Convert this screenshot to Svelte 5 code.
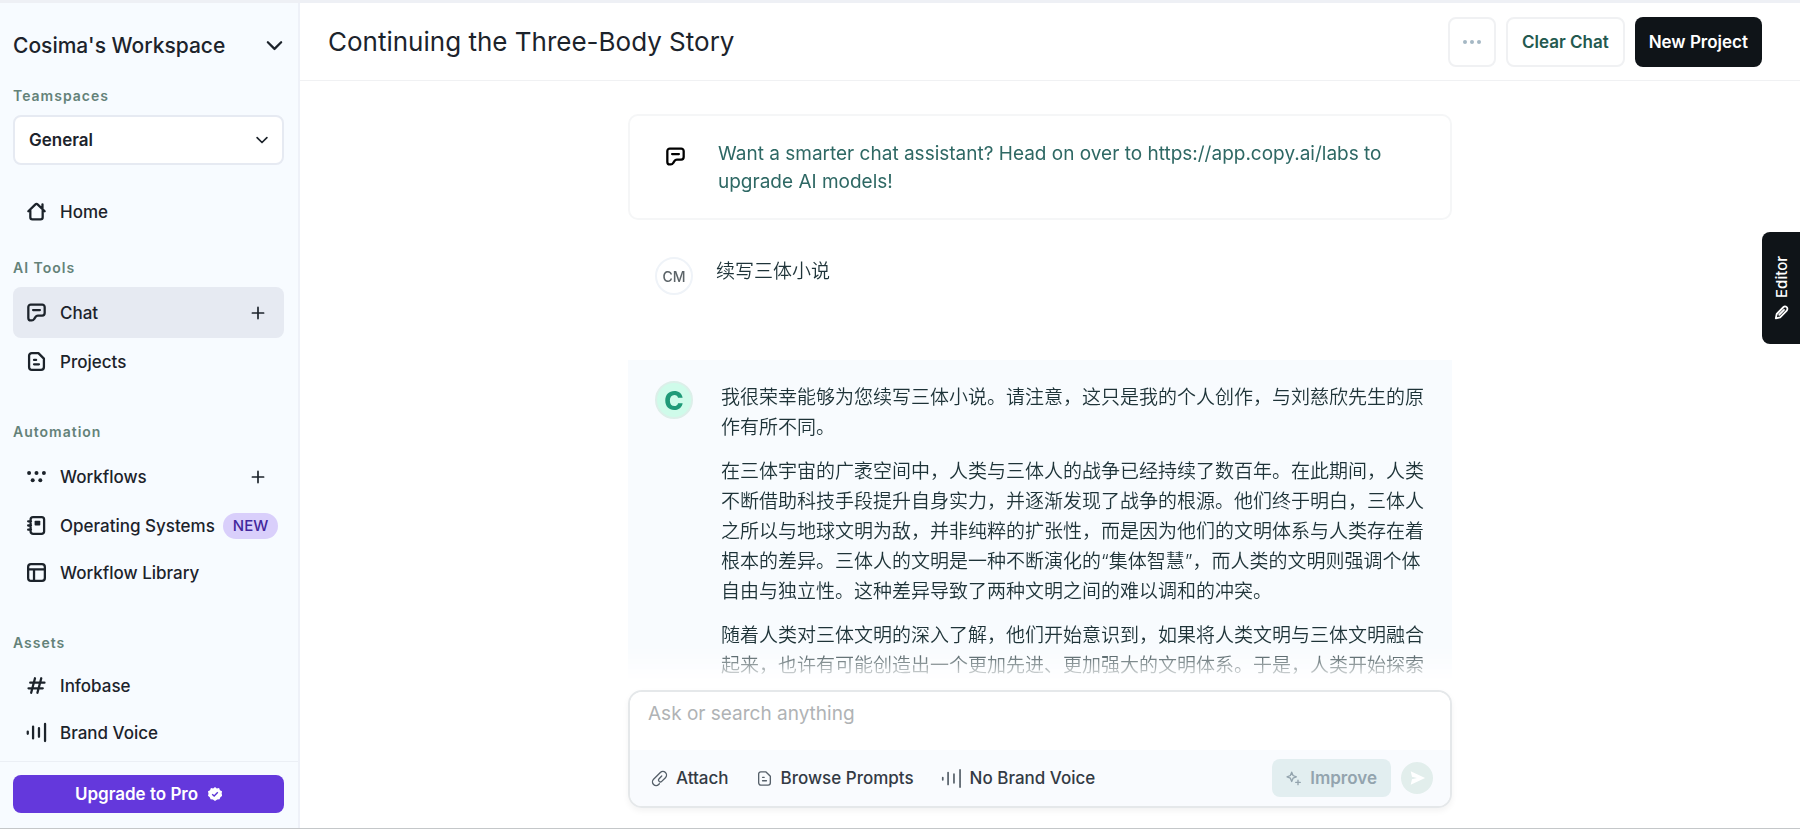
<script>
	let teamspace = $state('General');
	let prompt = $state('');

	const sections = [
		{
			title: 'AI Tools',
			items: [
				{ name: 'Chat', icon: 'bubble', active: true, plus: true },
				{ name: 'Projects', icon: 'doc' }
			]
		},
		{
			title: 'Automation',
			items: [
				{ name: 'Workflows', icon: 'dots', plus: true },
				{ name: 'Operating Systems', icon: 'book', badge: 'NEW' },
				{ name: 'Workflow Library', icon: 'layout' }
			]
		},
		{
			title: 'Assets',
			items: [
				{ name: 'Infobase', icon: 'hash' },
				{ name: 'Brand Voice', icon: 'voice' }
			]
		}
	];

	const answer = [
		'我很荣幸能够为您续写三体小说。请注意，这只是我的个人创作，与刘慈欣先生的原作有所不同。',
		'在三体宇宙的广袤空间中，人类与三体人的战争已经持续了数百年。在此期间，人类不断借助科技手段提升自身实力，并逐渐发现了战争的根源。他们终于明白，三体人之所以与地球文明为敌，并非纯粹的扩张性，而是因为他们的文明体系与人类存在着根本的差异。三体人的文明是一种不断演化的“集体智慧”，而人类的文明则强调个体自由与独立性。这种差异导致了两种文明之间的难以调和的冲突。',
		'随着人类对三体文明的深入了解，他们开始意识到，如果将人类文明与三体文明融合起来，也许有可能创造出一个更加先进、更加强大的文明体系。于是，人类开始探索'
	];
</script>

{#snippet icon(name)}
	<svg class="icon {name}" viewBox="0 0 20 20" aria-hidden="true">
		{#if name === 'house'}
			<path d="M3.5 9V16a2.2 2.2 0 0 0 2.200 2.200h8.600a2.200 2.200 0 0 0 2.200-2.200V9M1.400 9.800l7.200-7.100a2 2 0 0 1 2.800 0l7.200 7.100M16.300 2.400v5" />
		{:else if name === 'bubble'}
			<path d="M4 1.600h12a2.600 2.600 0 0 1 2.600 2.600v6.400a2.600 2.600 0 0 1-2.600 2.600h-4.600c-1.300 0-1.900.6-2.600 1.700l-1.300 2a3 3 0 0 1-2.500 1.500H4a2.600 2.600 0 0 1-2.600-2.600V4.200A2.600 2.600 0 0 1 4 1.600zM6.400 7.400h7.200" />
		{:else if name === 'doc'}
			<path d="M5 1.200h7L17.800 7v8.800a3 3 0 0 1-3 3H5.200a3 3 0 0 1-3-3V4a2.800 2.800 0 0 1 2.800-2.800zM7.400 8.400h2.200M7.400 13h5.200" />
		{:else if name === 'dots'}
			<g class="fill">
				<circle cx="2.200" cy="6.400" r="2.100" /><circle cx="10" cy="6.400" r="2.100" /><circle cx="17.800" cy="6.400" r="2.100" />
				<circle cx="6" cy="14" r="2.100" /><circle cx="14" cy="14" r="2.100" />
			</g>
		{:else if name === 'book'}
			<path d="M6.400 1.200h9a2.600 2.600 0 0 1 2.600 2.600v12.400a2.600 2.600 0 0 1-2.600 2.600h-9a2.600 2.600 0 0 1-2.600-2.600V3.800a2.600 2.600 0 0 1 2.600-2.600zM1.200 5.600h3M1.200 10h3M1.200 14.400h3" />
			<rect class="fill" x="8" y="5" width="6" height="5" rx=".8" />
		{:else if name === 'layout'}
			<rect x="1.200" y="1.200" width="17.600" height="17.600" rx="3" />
			<path d="M1.200 6.600h17.600M7.400 6.600v12" />
		{:else if name === 'hash'}
			<path d="M8.400 2.400 4.400 17.600M15 2.400l-4 15.200M3.400 7h15M1.600 13h15" />
		{:else if name === 'voice'}
			<path d="M.8 9v2.400M6.400 3.800v12.400M12.600 5.400v9.200M19 1v18" />
		{:else if name === 'clip'}
			<g transform="rotate(-45 10 10)">
				<path d="M5 14.800H3.600a4.800 4.800 0 0 1 0-9.600h12.800a4.800 4.800 0 0 1 0 9.600H9.400a2.400 2.400 0 0 1 0-5h5" />
			</g>
		{:else if name === 'spark'}
			<path d="M7.600 1.600 9.400 6l4.400 1.800L9.400 9.600l-1.800 4.400-1.800-4.400L1.400 7.800 5.800 6zM16 12.200v6M13 15.200h6" />
		{:else if name === 'down'}
			<path d="m3 6.600 7 7 7-7" />
		{:else if name === 'plus'}
			<path d="M10 2v16M2 10h16" />
		{:else if name === 'pencil'}
			<path d="M2.400 17.800 3.600 12 12.400 3a2.900 2.900 0 0 1 4.600 4.400L8.200 16.600zM7 13l6.400-6.400" />
		{/if}
	</svg>
{/snippet}

<div class="app">
	<aside class="sidebar">
		<div class="nav">
			<button class="workspace">
				<span>Cosima's Workspace</span>
				{@render icon('down')}
			</button>

			<label class="label" for="teamspace">Teamspaces</label>
			<div class="select">
				<select id="teamspace" bind:value={teamspace}>
					<option>General</option>
				</select>
				{@render icon('down')}
			</div>

			<nav>
				<div class="row home">
					<a href="#home">{@render icon('house')}<span>Home</span></a>
				</div>
				{#each sections as section (section.title)}
					<h2 class="label">{section.title}</h2>
					{#each section.items as item (item.name)}
						<div class="row" class:active={item.active} class:tall={item.plus}>
							<a href="#{item.icon}">{@render icon(item.icon)}<span>{item.name}</span></a>
							{#if item.badge}
								<span class="badge">{item.badge}</span>
							{/if}
							{#if item.plus}
								<button class="add" aria-label="New {item.name}">{@render icon('plus')}</button>
							{/if}
						</div>
					{/each}
				{/each}
			</nav>
		</div>
		<div class="upgrade">
			<button>
				Upgrade to Pro
				<svg viewBox="0 0 20 20" aria-hidden="true">
					<path d="m10 0 2.600 2 3.200-.4 1.300 3 2.900 1.600-.5 3.300.9 3.100-2.700 1.900-1.200 3-3.300.2L10 20l-2.900-2.300-3.400-.2-1.200-3L0 12.600l.7-3.100L0 6.200l2.900-1.600 1.300-3L7.400 2z" fill="#fff" />
					<path d="m6 10.400 2.800 2.600L14 7.400" fill="none" stroke="#5b35d5" stroke-width="2" />
				</svg>
			</button>
		</div>
	</aside>

	<main>
		<header>
			<h1>Continuing the Three-Body Story</h1>
			<div class="actions">
				<button class="more" aria-label="More">
					<svg viewBox="0 0 20 6" aria-hidden="true">
						<circle cx="3" cy="3" r="2" /><circle cx="10" cy="3" r="2" /><circle cx="17" cy="3" r="2" />
					</svg>
				</button>
				<button>Clear Chat</button>
				<button class="dark">New Project</button>
			</div>
		</header>

		<div class="thread">
			<section class="message notice">
				<div class="who">{@render icon('bubble')}</div>
				<p>Want a smarter chat assistant? Head on over to https://app.copy.ai/labs to upgrade AI models!</p>
			</section>
			<section class="message user">
				<div class="who"><span class="avatar">CM</span></div>
				<p lang="zh-CN">续写三体小说</p>
			</section>
			<section class="message bot">
				<div class="who"><span class="avatar logo">C</span></div>
				<div class="text" lang="zh-CN">
					{#each answer as paragraph}
						<p>{paragraph}</p>
					{/each}
				</div>
			</section>
		</div>

		<div class="dock">
			<form class="composer" onsubmit={(e) => e.preventDefault()}>
				<textarea rows="1" placeholder="Ask or search anything" aria-label="Message" bind:value={prompt}></textarea>
				<div class="tools">
					<button type="button">{@render icon('clip')}Attach</button>
					<button type="button">{@render icon('doc')}Browse Prompts</button>
					<button type="button">{@render icon('voice')}No Brand Voice</button>
					<button type="button" class="improve">{@render icon('spark')}Improve</button>
					<button class="send" aria-label="Send">
						<svg viewBox="0 0 20 20" aria-hidden="true"><path d="M3 2.500 19 10 3 17.500l1.400-6L10 10 4.400 8.500z" /></svg>
					</button>
				</div>
			</form>
		</div>
	</main>

	<button class="editor">{@render icon('pencil')}<span>Editor</span></button>
</div>

<style>
	:global(body) {
		background: #fff;
	}
	.app {
		box-sizing: border-box;
		display: flex;
		height: 100vh;
		border-top: 3px solid #eef0f5;
		border-bottom: 1px solid #c4c7c9;
		overflow: hidden;
		font-family: Inter, 'Noto Sans CJK SC', sans-serif;
		font-size: 17px;
		color: #1c232b;
	}
	.app * {
		box-sizing: border-box;
	}
	button,
	select,
	textarea {
		font: inherit;
		color: inherit;
	}
	button {
		display: flex;
		align-items: center;
		border: 0;
		padding: 0;
		background: none;
		cursor: pointer;
	}
	h1,
	h2,
	p {
		margin: 0;
	}
	.icon {
		flex: none;
		width: 19px;
		height: 19px;
		fill: none;
		stroke: currentColor;
		stroke-width: 2.400;
		stroke-linecap: round;
		stroke-linejoin: round;
		overflow: visible;
	}
	.fill {
		fill: currentColor;
		stroke: none;
	}

	/* sidebar */
	.sidebar {
		display: flex;
		flex-direction: column;
		flex: none;
		width: 300px;
		border-right: 2px solid #eef1f8;
		background: #f7fbff;
	}
	.nav {
		flex: 1;
		min-height: 0;
		padding: 23px 14px 0 13px;
		overflow: hidden;
	}
	.workspace {
		justify-content: space-between;
		width: 100%;
		height: 38px;
		margin-bottom: 22px;
		font-size: 21px;
		font-weight: 500;
	}
	.label {
		display: block;
		margin-bottom: 9px;
		font-size: 14px;
		font-weight: 600;
		line-height: 20px;
		letter-spacing: 1px;
		color: #648279;
	}
	.select {
		position: relative;
	}
	.select select {
		appearance: none;
		width: 100%;
		height: 50px;
		padding: 0 14px;
		border: 2px solid #e6eaf2;
		border-radius: 8px;
		background: #fff;
		font-weight: 600;
	}
	.select .icon {
		position: absolute;
		top: 18px;
		right: 15px;
		width: 14px;
		height: 14px;
		pointer-events: none;
	}
	.row {
		display: flex;
		align-items: center;
		height: 47px;
		padding: 0 14px;
		border-radius: 8px;
		font-weight: 500;
	}
	.row.home {
		margin: 23px 0;
	}
	.row.tall {
		height: 51px;
	}
	.row.active {
		background: #e6eaf2;
	}
	.row a {
		display: flex;
		align-items: center;
		gap: 14px;
		color: inherit;
		text-decoration: none;
		white-space: nowrap;
	}
	.row + .label {
		margin-top: 37px;
	}
	.row.home + .label {
		margin-top: 0;
	}
	.add {
		margin-left: auto;
		padding: 5px;
	}
	.add .icon {
		width: 14px;
		height: 14px;
	}
	.badge {
		margin-left: 8px;
		padding: 0 10px;
		border-radius: 13px;
		background: #d9cffb;
		color: #43279c;
		font-size: 15px;
		line-height: 26px;
	}
	.upgrade {
		padding: 13px 14px 15px 13px;
		border-top: 1px solid #ebeff5;
	}
	.upgrade button {
		justify-content: center;
		gap: 10px;
		width: 100%;
		height: 38px;
		border-radius: 8px;
		background: #6438dc;
		color: #fff;
		font-weight: 600;
	}
	.upgrade svg {
		width: 14px;
		height: 14px;
	}

	/* main column */
	main {
		display: flex;
		flex-direction: column;
		flex: 1;
		min-width: 0;
	}
	header {
		display: flex;
		align-items: center;
		justify-content: space-between;
		flex: none;
		height: 78px;
		padding: 0 38px 0 28px;
		border-bottom: 1px solid #f0f1f3;
	}
	h1 {
		font-size: 26px;
		font-weight: 400;
	}
	.actions {
		display: flex;
		gap: 10px;
	}
	.actions button {
		height: 50px;
		padding: 0 14px;
		border: 2px solid #f0f1f3;
		border-radius: 8px;
		font-weight: 600;
		color: #23594f;
	}
	.actions .more {
		padding: 0 12px;
	}
	.actions svg {
		width: 20px;
		height: 6px;
		fill: #a5b8c4;
	}
	.actions .dark {
		border: 0;
		background: #0f1418;
		color: #fff;
	}
	.thread {
		flex: 1;
		min-height: 0;
		padding: 33px 20px 0 0;
		overflow-y: auto;
		scrollbar-width: none;
		mask-image: linear-gradient(to top, transparent 8px, #000 44px);
	}
	.message {
		display: flex;
		max-width: 824px;
		margin: 0 auto;
		padding: 0 27px;
	}
	.who {
		flex: none;
		width: 61px;
	}
	.notice {
		padding-top: 24px;
		padding-bottom: 22px;
		border: 2px solid #f5f6f7;
		border-radius: 10px;
	}
	.notice p {
		font-size: 19px;
		line-height: 28px;
		color: #2e6864;
	}
	.notice .icon {
		display: block;
		margin: 7px 0 0 9px;
		color: #000;
	}
	.user {
		height: 140px;
		padding-top: 37px;
	}
	.user p,
	.bot p {
		font-size: 19px;
		font-weight: 350;
		line-height: 30px;
		color: #1e3338;
	}
	.avatar {
		display: flex;
		align-items: center;
		justify-content: center;
		width: 38px;
		height: 38px;
		border: 2px solid #eff3f8;
		border-radius: 50%;
		font-size: 14px;
		font-weight: 500;
		color: #5c6468;
	}
	.bot {
		padding-top: 21px;
		background: #f8fbfe;
	}
	.bot .who {
		width: 66px;
	}
	.text {
		padding-top: 2px;
	}
	.bot p {
		margin-bottom: 14px;
	}
	.logo {
		border-color: #dcefe9;
		background: #cffbea;
		color: #1f9a78;
		font-size: 26px;
		font-weight: 800;
	}

	/* composer */
	.dock {
		flex: none;
		padding: 0 20px 20px 0;
	}
	.composer {
		max-width: 824px;
		margin: 0 auto;
		border: 2px solid #e5e8ea;
		border-radius: 14px;
		box-shadow: 0 3px 6px #0000000d;
		overflow: hidden;
	}
	textarea {
		display: block;
		width: 100%;
		height: 58px;
		padding: 8px 18px;
		border: 0;
		outline: 0;
		resize: none;
		background: #fff;
		font-size: 19px;
		line-height: 28px;
	}
	textarea::placeholder {
		color: #b0b3b5;
	}
	.tools {
		display: flex;
		align-items: center;
		gap: 28px;
		height: 56px;
		padding: 0 17px 0 22px;
		background: #f9fbfe;
		font-weight: 500;
		color: #333a44;
	}
	.tools button {
		gap: 9px;
	}
	.tools .icon {
		width: 15px;
		height: 15px;
		stroke-width: 1.800;
		color: #56606a;
	}
	.tools .voice {
		width: 19px;
		height: 19px;
	}
	.tools .improve {
		height: 38px;
		margin-left: auto;
		padding: 0 14px;
		border-radius: 8px;
		background: #e2eef0;
		color: #93a4ae;
		font-weight: 600;
	}
	.improve .icon {
		color: #93a4ae;
	}
	.tools .send {
		justify-content: center;
		width: 32px;
		height: 32px;
		margin-left: -18px;
		border-radius: 50%;
		background: #e2eeec;
	}
	.send svg {
		width: 18px;
		height: 18px;
		fill: #fff;
	}

	/* side tab, text runs bottom to top */
	.editor {
		position: fixed;
		top: 232px;
		right: 0;
		flex-direction: column-reverse;
		justify-content: center;
		gap: 8px;
		width: 38px;
		height: 112px;
		border-radius: 8px 0 0 8px;
		background: #0f1418;
		color: #fff;
		font-size: 15px;
		font-weight: 500;
	}
	.editor span {
		writing-mode: vertical-rl;
		transform: rotate(180deg);
	}
	.editor .icon {
		width: 15px;
		height: 15px;
	}
</style>
